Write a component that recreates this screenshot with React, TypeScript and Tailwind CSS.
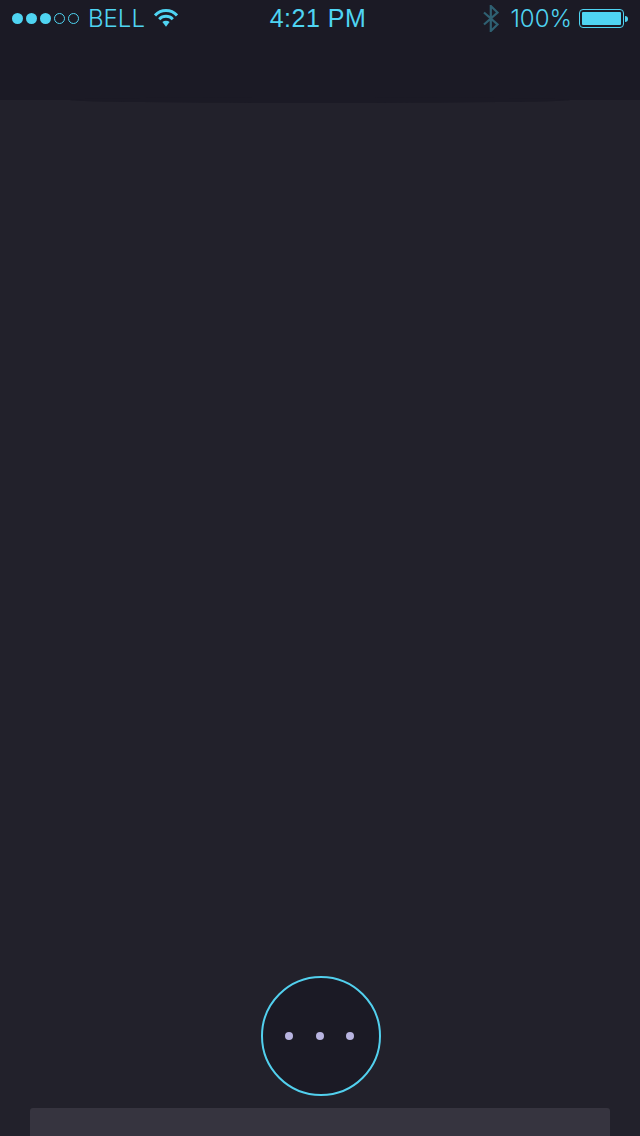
function WifiIcon() {
  return (
    <svg width="24" height="20" viewBox="0 0 24 20" fill="none" className="ml-[9px] mb-[1px]">
      <path d="M1 7.4 C7 1 17 1 23 7.4" stroke="#4fd4f2" strokeWidth="3" />
      <path d="M5.2 11.2 C9 7.4 15 7.4 18.8 11.2" stroke="#4fd4f2" strokeWidth="3" />
      <path d="M8.4 14 L12 18.8 L15.6 14 C13.6 12.4 10.4 12.4 8.4 14 Z" fill="#4fd4f2" />
    </svg>
  );
}

function BluetoothIcon() {
  return (
    <svg width="16" height="27" viewBox="0 0 16 27" fill="none" className="mr-[11px]">
      <path d="M1 7.5 L14.5 19.5 L7.8 26 L7.8 1 L14.5 7.5 L1 19.5" stroke="#2f6072" strokeWidth="2.2" />
    </svg>
  );
}

function StatusBar() {
  return (
    <div className="flex h-[37px] items-center justify-between pl-3 pr-3 text-[#4fd4f2]">
      <div className="flex w-[196px] items-center">
        <div className="flex gap-[3px]">
          <span className="size-[11px] rounded-full bg-[#4fd4f2]" />
          <span className="size-[11px] rounded-full bg-[#4fd4f2]" />
          <span className="size-[11px] rounded-full bg-[#4fd4f2]" />
          <span className="size-[11px] rounded-full border border-[#4fd4f2]" />
          <span className="size-[11px] rounded-full border border-[#4fd4f2]" />
        </div>
        <span className="ml-[9px] text-[24px] font-light">BELL</span>
        <WifiIcon />
      </div>
      <div className="font-['Liberation_Sans',sans-serif] text-[25px] tracking-[0.5px]">4:21 PM</div>
      <div className="flex w-[200px] items-center justify-end">
        <BluetoothIcon />
        <span className="text-[24px] font-light">100%</span>
        <div className="ml-[7px] flex items-center">
          <div className="h-[19px] w-[45px] rounded-[4px] border border-[#4fd4f2] p-[2px]">
            <div className="h-full rounded-[1px] bg-[#4fd4f2]" />
          </div>
          <div className="ml-[1px] h-[6px] w-[3px] rounded-r-sm bg-[#4fd4f2]" />
        </div>
      </div>
    </div>
  );
}

export default function App() {
  return (
    <div className="flex h-[1136px] w-[640px] flex-col overflow-hidden bg-[#22212b] font-['Inter',sans-serif]">
      <div className="relative h-[100px] bg-[#1b1a25]">
        <StatusBar />
        {/* slight curve under the header */}
        <div className="absolute left-[70px] top-[97px] h-[6px] w-[500px] rounded-[50%] bg-[#1b1a25]" />
      </div>
      <div className="flex flex-1 flex-col items-center justify-end">
        <div className="ml-[1px] flex size-[120px] items-center justify-center gap-[22px] rounded-full border-2 border-[#52d0ee] bg-[#1b1a25] pr-[2px]">
          <span className="mr-[1px] size-[8px] rounded-full bg-[#b8b4e0]" />
          <span className="size-[8px] rounded-full bg-[#b8b4e0]" />
          <span className="size-[8px] rounded-full bg-[#b8b4e0]" />
        </div>
        <div className="mt-3 h-[28px] w-[580px] rounded-t-[3px] bg-[#36343f]" />
      </div>
    </div>
  );
}
